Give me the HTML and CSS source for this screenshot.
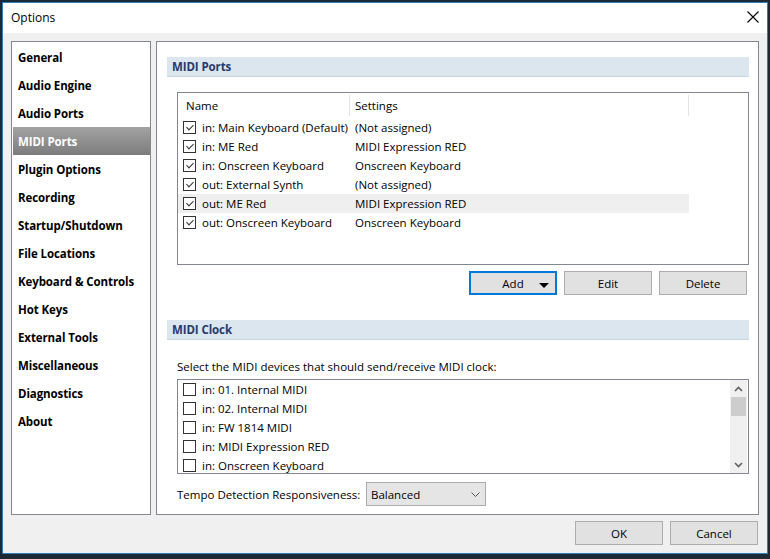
FILE: index.html
```html
<!DOCTYPE html>
<html>
<head>
<meta charset="utf-8">
<title>Options</title>
<link rel="stylesheet" href="styles.css">
</head>
<body>
<div class="window">
  <div class="titlebar">
    <span class="title">Options</span>
    <svg class="close" width="12" height="12" viewBox="0 0 12 12"><path d="M0.5 0.5 L11.5 11.5 M11.5 0.5 L0.5 11.5" stroke="#000" stroke-width="1.1" fill="none"/></svg>
  </div>
  <div class="body">
    <div class="content">
      <nav class="sidebar">
        <div class="nav-item">General</div>
        <div class="nav-item">Audio Engine</div>
        <div class="nav-item">Audio Ports</div>
        <div class="nav-item selected">MIDI Ports</div>
        <div class="nav-item">Plugin Options</div>
        <div class="nav-item">Recording</div>
        <div class="nav-item">Startup/Shutdown</div>
        <div class="nav-item">File Locations</div>
        <div class="nav-item">Keyboard &amp; Controls</div>
        <div class="nav-item">Hot Keys</div>
        <div class="nav-item">External Tools</div>
        <div class="nav-item">Miscellaneous</div>
        <div class="nav-item">Diagnostics</div>
        <div class="nav-item">About</div>
      </nav>
      <main class="panel">
        <div class="section-head">MIDI Ports</div>
        <div class="ports-table">
          <div class="thead">
            <div class="th th-name">Name</div>
            <div class="th th-settings">Settings</div>
          </div>
          <div class="row"><div class="cell-name"><span class="cb checked"></span>in: Main Keyboard (Default)</div><div class="cell-set">(Not assigned)</div></div>
          <div class="row"><div class="cell-name"><span class="cb checked"></span>in: ME Red</div><div class="cell-set">MIDI Expression RED</div></div>
          <div class="row"><div class="cell-name"><span class="cb checked"></span>in: Onscreen Keyboard</div><div class="cell-set">Onscreen Keyboard</div></div>
          <div class="row"><div class="cell-name"><span class="cb checked"></span>out: External Synth</div><div class="cell-set">(Not assigned)</div></div>
          <div class="row hover"><div class="cell-name"><span class="cb checked"></span>out: ME Red</div><div class="cell-set">MIDI Expression RED</div></div>
          <div class="row"><div class="cell-name"><span class="cb checked"></span>out: Onscreen Keyboard</div><div class="cell-set">Onscreen Keyboard</div></div>
        </div>
        <div class="btn-row">
          <button class="btn btn-add focused"><span class="add-label">Add</span><span class="tri"></span></button>
          <button class="btn">Edit</button>
          <button class="btn">Delete</button>
        </div>
        <div class="section-head clock-head">MIDI Clock</div>
        <div class="clock-label">Select the MIDI devices that should send/receive MIDI clock:</div>
        <div class="clock-list">
          <div class="list-items">
            <div class="litem"><span class="cb"></span>in: 01. Internal MIDI</div>
            <div class="litem"><span class="cb"></span>in: 02. Internal MIDI</div>
            <div class="litem"><span class="cb"></span>in: FW 1814 MIDI</div>
            <div class="litem"><span class="cb"></span>in: MIDI Expression RED</div>
            <div class="litem"><span class="cb"></span>in: Onscreen Keyboard</div>
          </div>
          <div class="scrollbar">
            <svg class="arr" width="9" height="6" viewBox="0 0 9 6"><path d="M1 5 L4.5 1.5 L8 5" stroke="#606060" stroke-width="1.6" fill="none"/></svg>
            <div class="thumb"></div>
            <div class="track"></div>
            <svg class="arr" width="9" height="6" viewBox="0 0 9 6"><path d="M1 1 L4.5 4.5 L8 1" stroke="#606060" stroke-width="1.6" fill="none"/></svg>
          </div>
        </div>
        <div class="tempo-row">
          <span class="tempo-label">Tempo Detection Responsiveness:</span>
          <div class="select"><span>Balanced</span><svg width="9" height="5" viewBox="0 0 9 5"><path d="M0.5 0.5 L4.5 4.5 L8.5 0.5" stroke="#555" stroke-width="1" fill="none"/></svg></div>
        </div>
      </main>
    </div>
    <div class="footer">
      <button class="btn">OK</button>
      <button class="btn">Cancel</button>
    </div>
  </div>
</div>
</body>
</html>
```

FILE: styles.css
```css
html, body {
  margin: 0;
  padding: 0;
}
body {
  background: #1d2a35;
  width: 770px;
  height: 559px;
  overflow: hidden;
  font-family: "Open Sans", "Noto Sans", sans-serif;
  font-size: 11.5px;
  color: #000;
}
.window {
  margin: 2px 0 0 2px;
  width: 764px;
  height: 550px;
  border: 1px solid #2a7fc0;
  background: #f0f0f0;
  display: flex;
  flex-direction: column;
}
.titlebar {
  height: 30px;
  background: #fff;
  display: flex;
  align-items: center;
  justify-content: space-between;
  padding: 0 8px 0 8px;
  flex-shrink: 0;
}
.title {
  font-size: 12px;
  position: relative;
  top: -1px;
}
.close {
  position: relative;
  top: -1px;
}
.body {
  flex: 1;
  display: flex;
  flex-direction: column;
  padding: 8px 8px 0 8px;
}
.content {
  display: flex;
  gap: 5px;
  height: 474px;
}
.sidebar {
  width: 140px;
  box-sizing: border-box;
  border: 1px solid #828790;
  background: #fff;
  padding: 1px 0 1px 1px;
}
.nav-item {
  height: 28px;
  box-sizing: border-box;
  padding: 2px 0 0 5px;
  line-height: 26px;
  font-weight: 700;
  font-size: 11.5px;
  letter-spacing: -0.1px;
  color: #000;
  white-space: nowrap;
}
.nav-item.selected {
  background: linear-gradient(#a3a3a3, #7c7c7c);
  color: #fff;
}
.panel {
  width: 603px;
  box-sizing: border-box;
  border: 1px solid #828790;
  background: #fff;
  padding: 15px 9px 0 10px;
}
.section-head {
  height: 20px;
  box-sizing: border-box;
  padding: 1px 0 0 5px;
  line-height: 18px;
  background: #dce6ee;
  border-bottom: 1px solid #c9d5df;
  font-weight: 700;
  font-size: 11.5px;
  letter-spacing: -0.1px;
  color: #26396f;
}
.ports-table {
  margin: 15px 0 0 10px;
  height: 173px;
  box-sizing: border-box;
  border: 1px solid #828790;
}
.thead {
  display: flex;
  height: 25px;
  align-items: center;
}
.th {
  height: 21px;
  line-height: 21px;
  box-sizing: border-box;
  border-right: 1px solid #e3e3e3;
}
.th-name {
  width: 172px;
  padding-left: 8px;
}
.th-settings {
  width: 339px;
  padding-left: 5px;
}
.row {
  display: flex;
  height: 19px;
  line-height: 19px;
  width: 511px;
}
.row.hover {
  background: #efefef;
}
.cell-name {
  width: 172px;
  padding-left: 5px;
  box-sizing: border-box;
  display: flex;
  align-items: center;
  white-space: nowrap;
}
.cell-set {
  padding-left: 5px;
  white-space: nowrap;
}
.cb {
  display: inline-block;
  width: 13px;
  height: 13px;
  box-sizing: border-box;
  border: 1px solid #333;
  background: #fff;
  margin-right: 6px;
  flex-shrink: 0;
  position: relative;
}
.cb.checked::after {
  content: "";
  position: absolute;
  left: 2px;
  top: 0px;
  width: 6px;
  height: 3px;
  border-left: 1px solid #333;
  border-bottom: 1px solid #333;
  transform: translate(0.5px, 2.5px) rotate(-45deg);
}
.btn-row {
  display: flex;
  justify-content: flex-end;
  gap: 7px;
  margin-top: 6px;
  padding-right: 2px;
}
.btn {
  width: 88px;
  height: 24px;
  box-sizing: border-box;
  border: 1px solid #adadad;
  background: #e1e1e1;
  font-family: inherit;
  font-size: 11.5px;
  color: #000;
  padding: 0;
  margin: 0;
}
.btn.focused {
  border: 2px solid #0078d7;
}
.btn-add {
  display: flex;
  align-items: center;
  justify-content: center;
  position: relative;
}
.tri {
  position: absolute;
  right: 6px;
  top: 10px;
  width: 0;
  height: 0;
  border-left: 5px solid transparent;
  border-right: 5px solid transparent;
  border-top: 5px solid #000;
}
.clock-head {
  margin-top: 25px;
}
.clock-label {
  margin: 19px 0 0 10px;
  height: 16px;
  line-height: 16px;
  white-space: nowrap;
}
.clock-list {
  margin: 4px 0 0 10px;
  height: 95px;
  box-sizing: border-box;
  border: 1px solid #828790;
  display: flex;
  overflow: hidden;
}
.list-items {
  flex: 1;
}
.litem {
  height: 19px;
  line-height: 19px;
  padding-left: 5px;
  display: flex;
  align-items: center;
  white-space: nowrap;
}
.scrollbar {
  width: 17px;
  margin-right: 1px;
  background: #f0f0f0;
  display: flex;
  flex-direction: column;
  align-items: center;
}
.arr {
  margin: 6px 0 5px 0;
  flex-shrink: 0;
}
.thumb {
  width: 15px;
  height: 19px;
  background: #cdcdcd;
  flex-shrink: 0;
}
.track {
  flex: 1;
}
.scrollbar .arr:last-child {
  margin: 4px 0 5px 0;
}
.tempo-row {
  display: flex;
  align-items: center;
  margin: 8px 0 0 10px;
}
.tempo-label {
  width: 189px;
  white-space: nowrap;
}
.select {
  width: 120px;
  height: 24px;
  box-sizing: border-box;
  border: 1px solid #acacac;
  background: #e5e5e5;
  display: flex;
  align-items: center;
  justify-content: space-between;
  padding: 0 5px 0 4px;
}
.footer {
  display: flex;
  justify-content: flex-end;
  gap: 7px;
  padding: 6px 1px 0 0;
}
```
